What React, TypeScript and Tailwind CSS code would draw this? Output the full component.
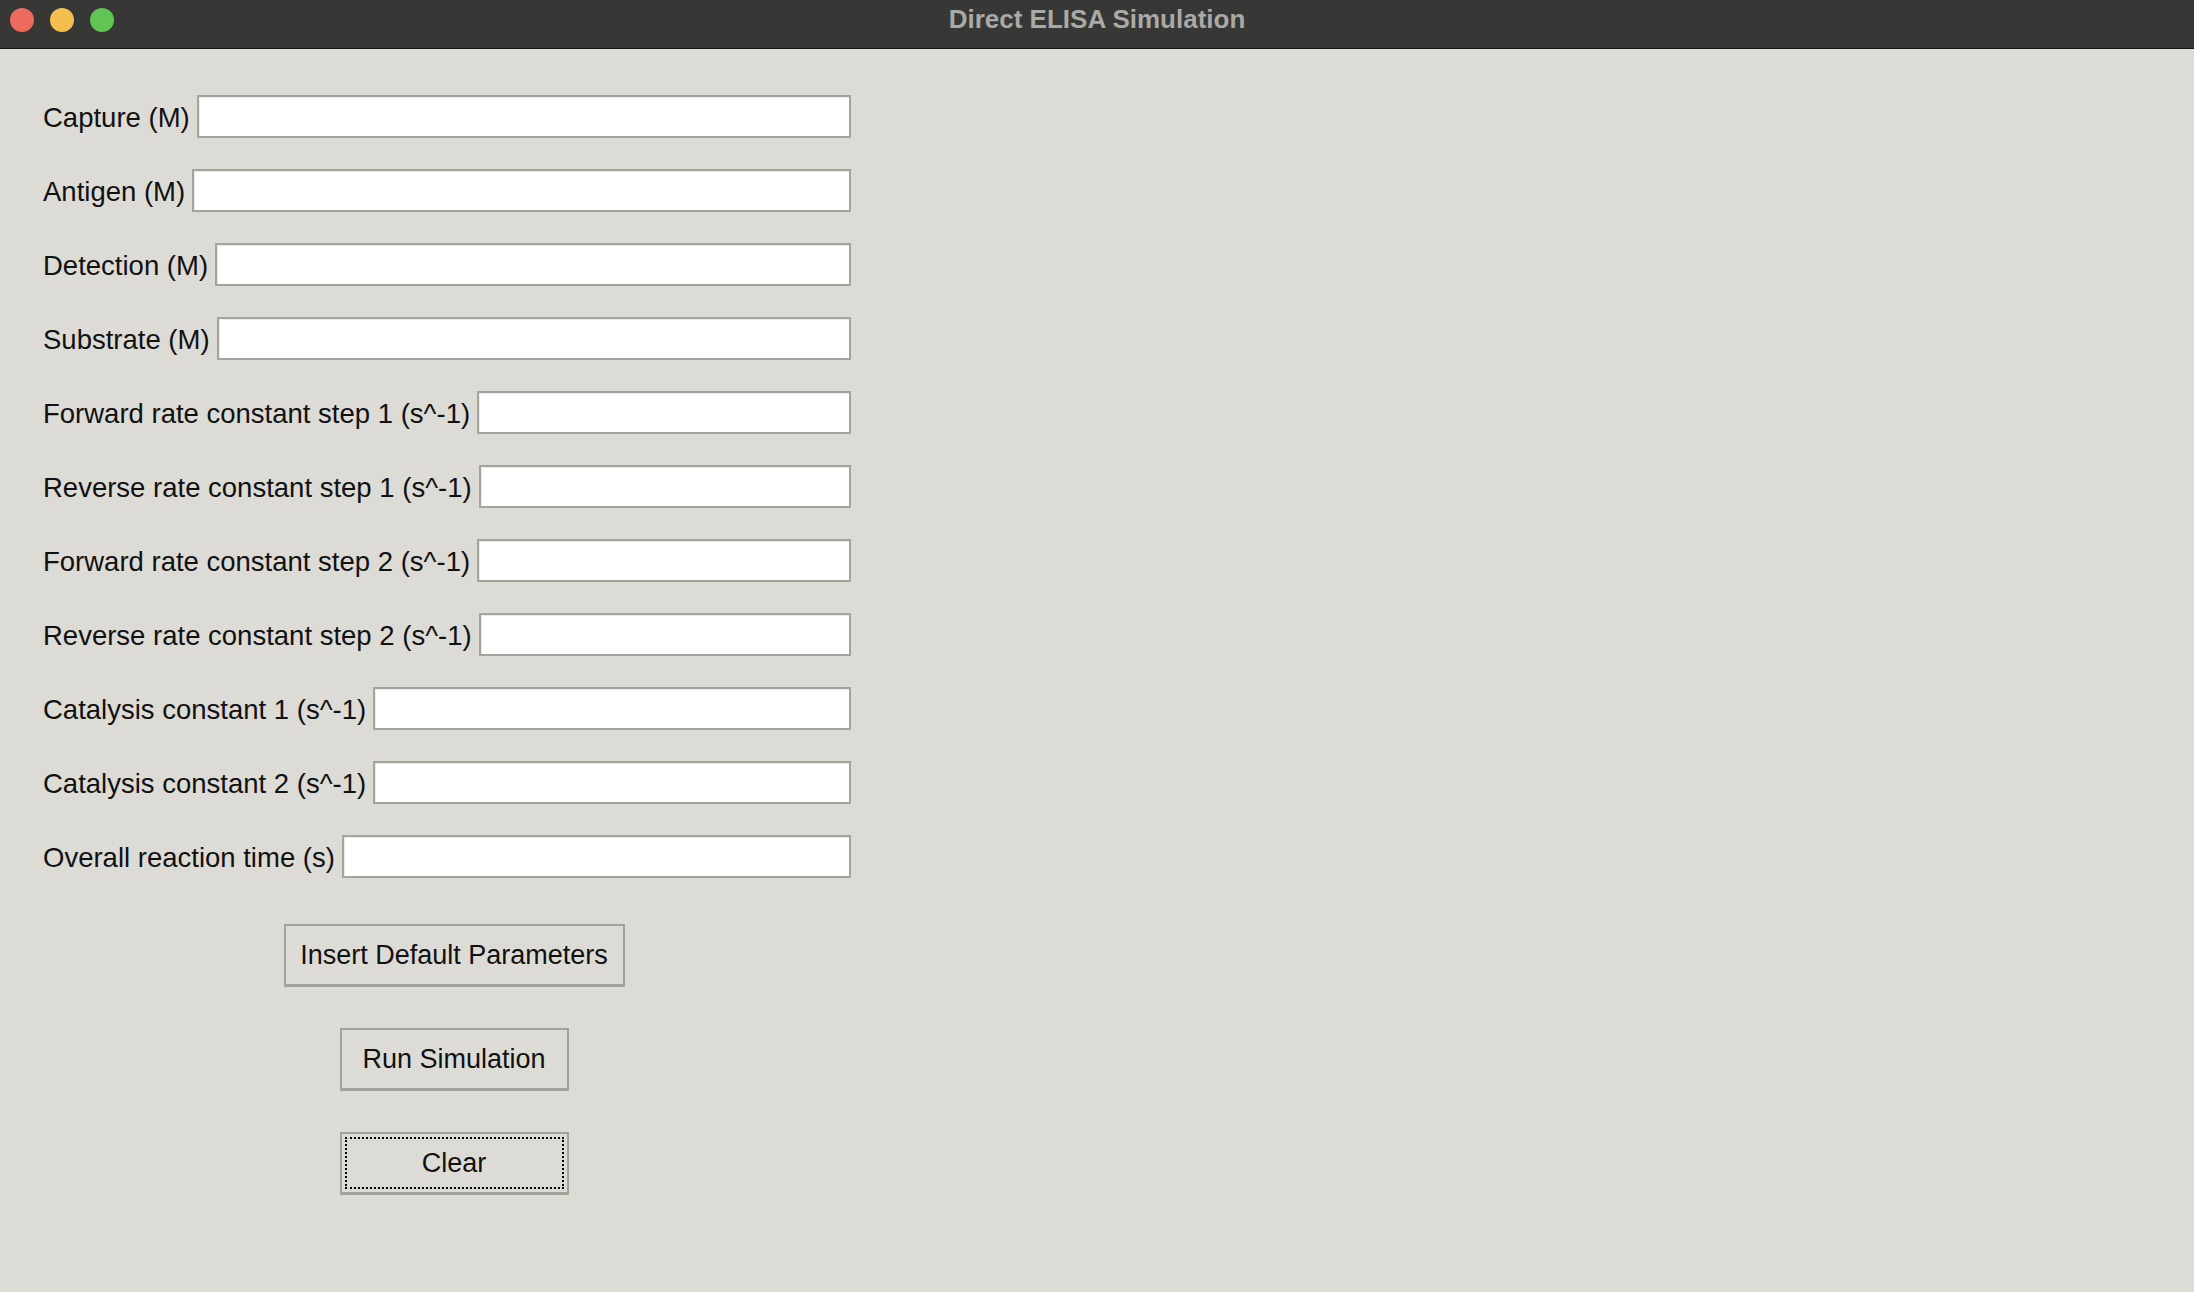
const fields = [
  "Capture (M)",
  "Antigen (M)",
  "Detection (M)",
  "Substrate (M)",
  "Forward rate constant step 1 (s^-1)",
  "Reverse rate constant step 1 (s^-1)",
  "Forward rate constant step 2 (s^-1)",
  "Reverse rate constant step 2 (s^-1)",
  "Catalysis constant 1 (s^-1)",
  "Catalysis constant 2 (s^-1)",
  "Overall reaction time (s)",
];

function TkButton({
  label,
  width,
  focused,
}: {
  label: string;
  width: string;
  focused?: boolean;
}) {
  return (
    <button
      className={`${width} h-[63px] border-2 border-[#a3a29b] border-b-[3px] bg-[#dddbd6] p-[3px] text-[27px] text-[#111]`}
    >
      <div
        className={`flex h-full w-full items-center justify-center ${
          focused ? "border-2 border-dotted border-black" : ""
        }`}
      >
        {label}
      </div>
    </button>
  );
}

export default function App() {
  return (
    <div
      className="flex h-[1292px] w-full flex-col overflow-hidden bg-[#dcdbd6]"
      style={{ fontFamily: '"Liberation Sans", Arial, sans-serif' }}
    >
      {/* title bar */}
      <div className="grid h-[49px] grid-cols-[1fr_auto_1fr] items-center border-b border-[#141414] bg-[#373735] pb-[9px]">
        <div className="flex items-center gap-[16px] pl-[10px]">
          <div className="size-[24px] rounded-full bg-[#ed6a5e]" />
          <div className="size-[24px] rounded-full bg-[#f5bf4f]" />
          <div className="size-[24px] rounded-full bg-[#61c554]" />
        </div>
        <div className="text-[26px] font-bold text-[#a9a9a6]">
          Direct ELISA Simulation
        </div>
        <div />
      </div>

      <div className="flex flex-col px-[43px] pt-[46px]">
        <div className="flex w-[808px] flex-col gap-[31px]">
          {fields.map((f) => (
            <div key={f} className="flex h-[43px] items-center gap-[7px]">
              <span className="whitespace-nowrap pt-[2px] text-[27.5px] text-[#111]">
                {f}
              </span>
              <input
                type="text"
                className="h-[43px] flex-1 border-2 border-[#a4a39c] bg-white shadow-[inset_1px_1px_0_#ebeae6] outline-none"
              />
            </div>
          ))}
        </div>

        <div className="mt-[46px] flex w-[822px] flex-col items-center gap-[41px]">
          <TkButton label="Insert Default Parameters" width="w-[341px]" />
          <TkButton label="Run Simulation" width="w-[229px]" />
          <TkButton label="Clear" width="w-[229px]" focused />
        </div>
      </div>
    </div>
  );
}
